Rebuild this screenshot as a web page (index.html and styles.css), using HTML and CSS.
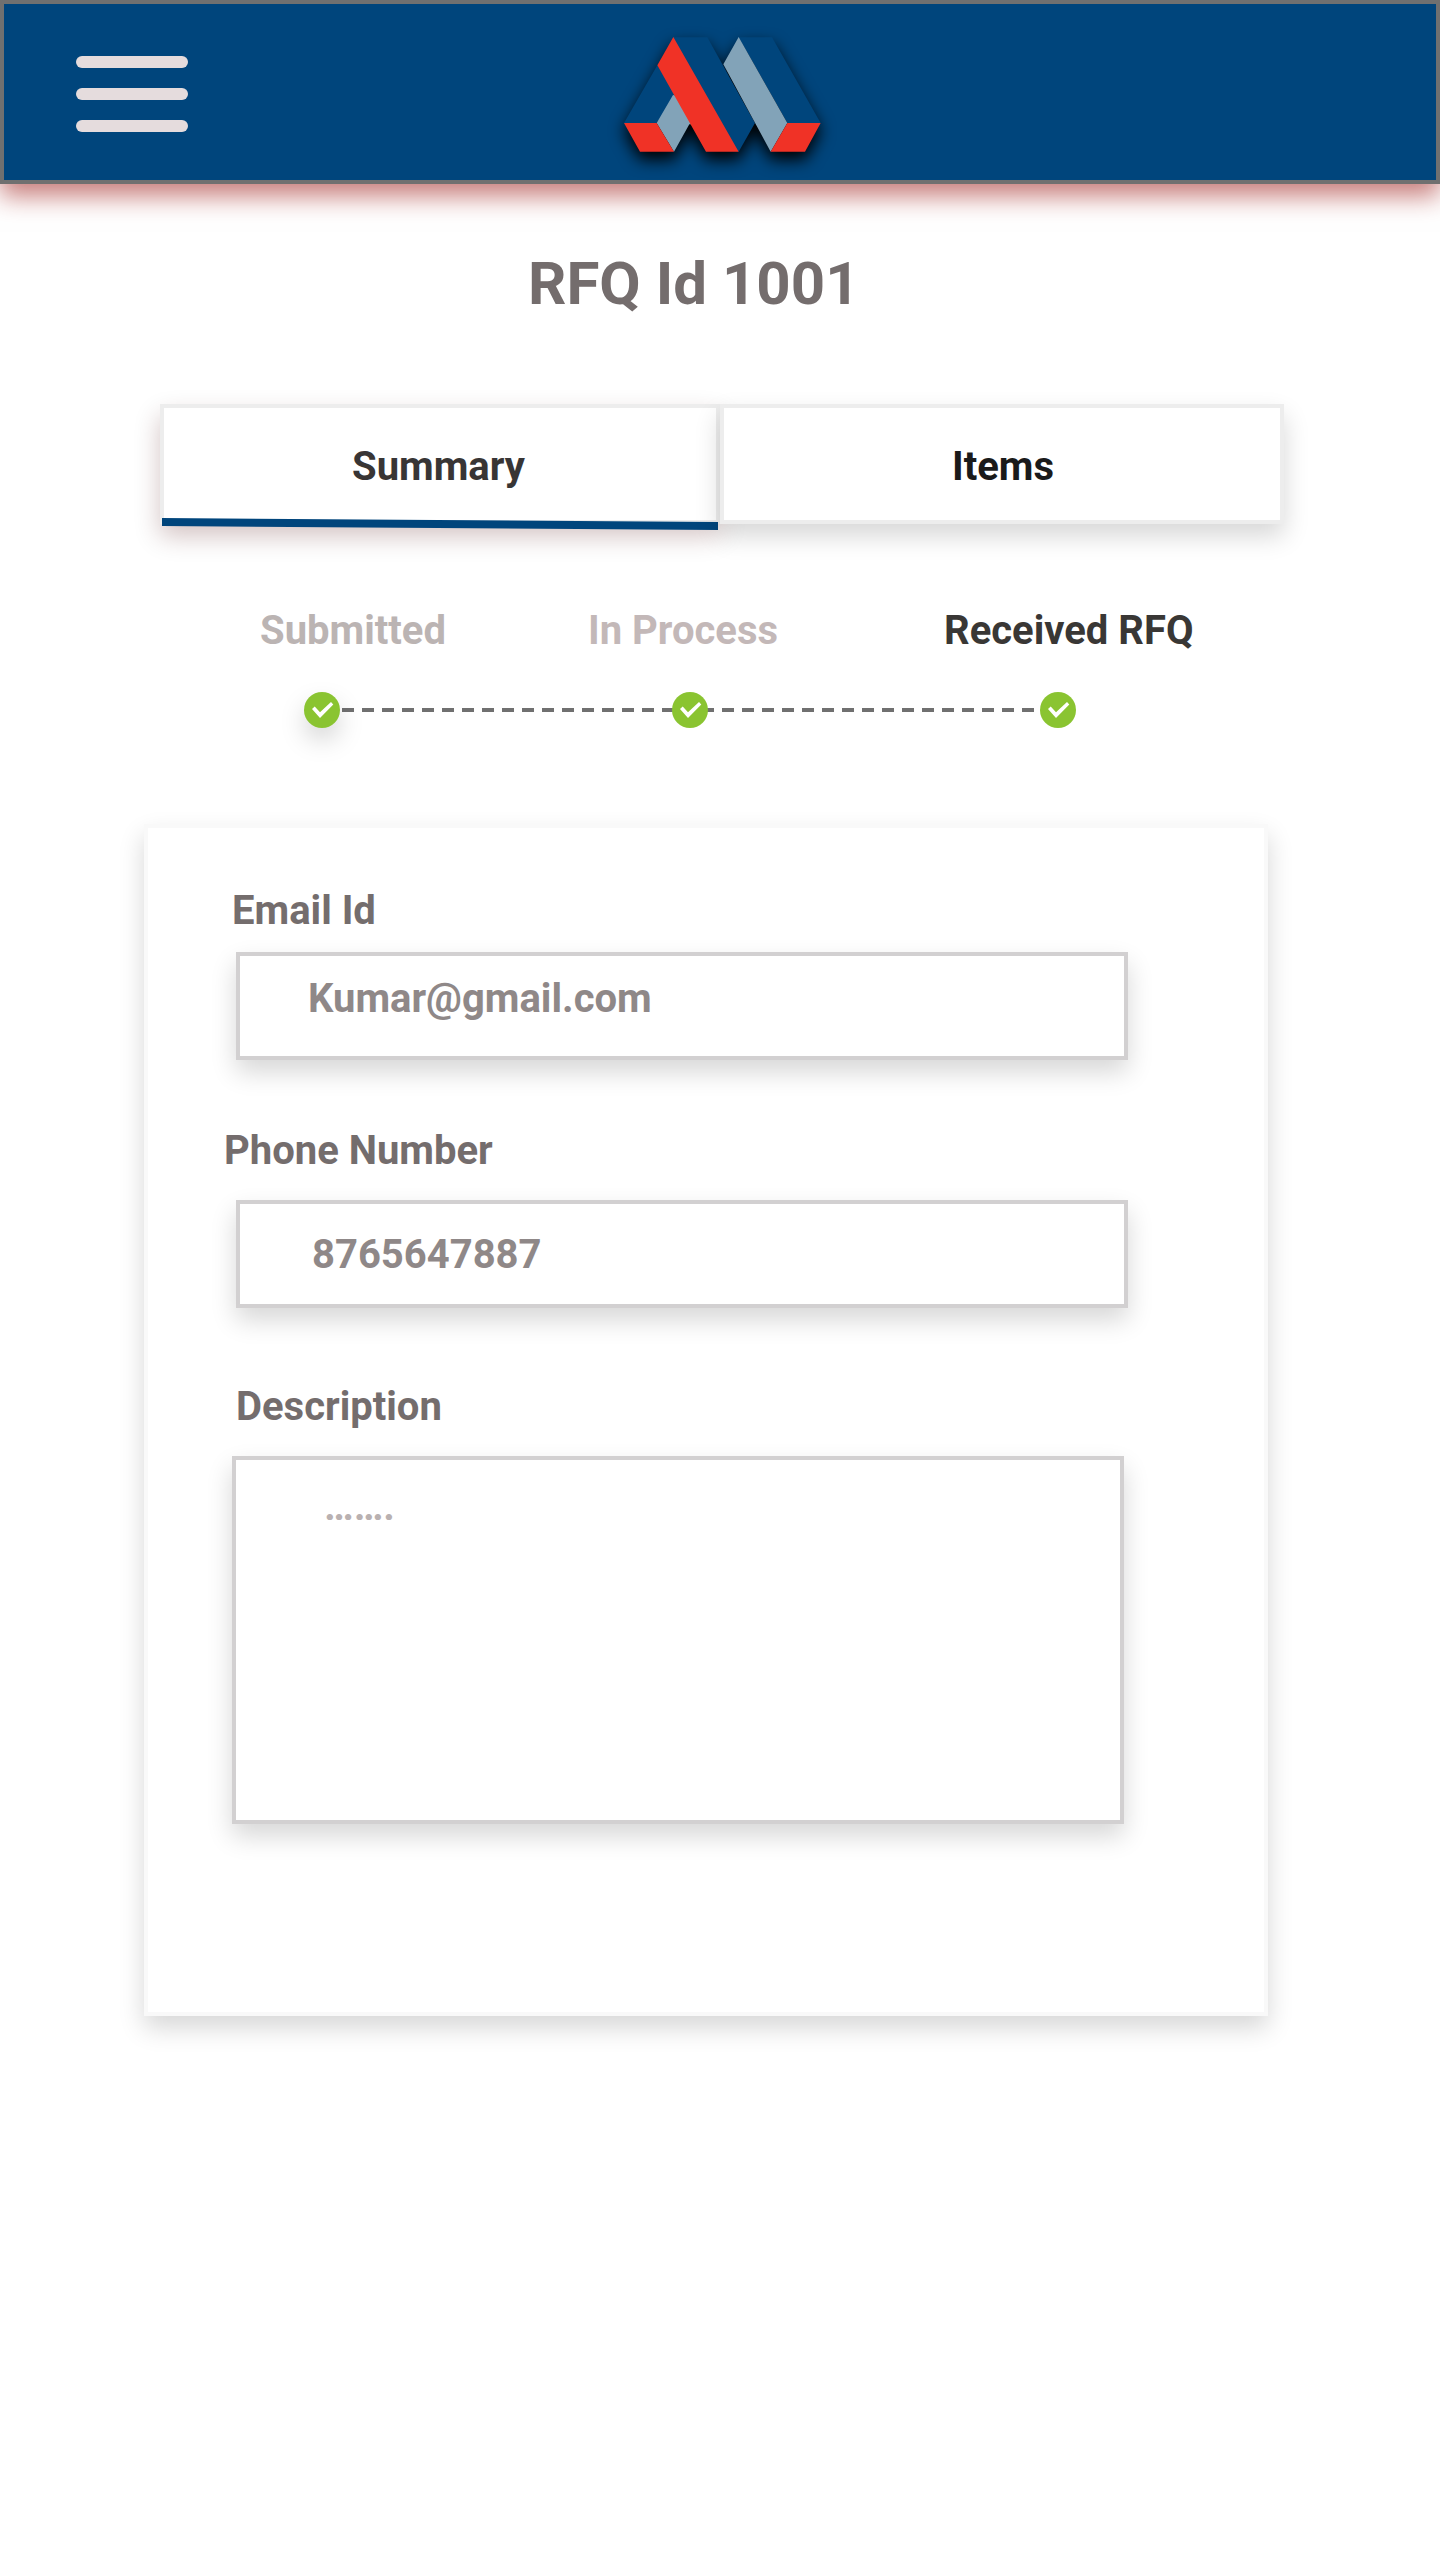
FILE: index.html
```html
<!DOCTYPE html>
<html lang="en">
<head>
<meta charset="utf-8">
<title>RFQ Id 1001</title>
<link rel="stylesheet" href="styles.css">
</head>
<body>
<header class="topbar">
  <div class="menu"><span class="menu-bar"></span><span class="menu-bar"></span><span class="menu-bar"></span></div>
  <svg class="logo" viewBox="72 80 591 345">
    <path fill="#00457c" d="M220 81H322L465 338L416 424L300 300ZM172 165L72 338H170L230 256ZM416 81H516L662 338H562Z"/>
    <path fill="#82a3b8" d="M170 338L219 254L230 256L274 342H268L222 424ZM416 80L370 162L512 424L562 338Z"/>
    <path fill="#f03226" d="M220 80L172 165L318 424H416ZM72 338H170L222 424H120ZM562 338H662L615 424H512Z"/>
  </svg>
</header>
<main>
  <h1 class="title">RFQ Id 1001</h1>
  <nav class="tabs">
    <div class="tab tab-summary">Summary
      <svg class="tab-line" viewBox="0 0 556 12"><path d="M0 0L556 4V12L0 8Z" fill="#00457c"/></svg>
    </div>
    <div class="tab tab-items">Items</div>
  </nav>
  <section class="status">
    <div class="labels">
      <span class="label submitted">Submitted</span>
      <span class="label process">In Process</span>
      <span class="label received">Received RFQ</span>
    </div>
    <svg class="track" viewBox="0 0 772 36">
      <defs>
        <g id="step"><circle cx="18" cy="18" r="18" fill="#8ac431"/><path fill="#fff" d="M8 17L10.7 14.5L16 20.3L27 10L29.3 12.5L16 26Z"/></g>
      </defs>
      <path d="M38 18H732" stroke="#707070" stroke-width="4" stroke-dasharray="12 8"/>
      <use class="step-shadow" href="#step"/>
      <use href="#step" x="368"/>
      <use href="#step" x="736"/>
    </svg>
  </section>
  <section class="card">
    <div class="field email">
      <div class="name">Email Id</div>
      <div class="box">Kumar@gmail.com</div>
    </div>
    <div class="field phone">
      <div class="name">Phone Number</div>
      <div class="box">8765647887</div>
    </div>
    <div class="field description">
      <div class="name">Description</div>
      <div class="box">…….</div>
    </div>
  </section>
</main>
</body>
</html>
```
FILE: styles.css
```css
* { box-sizing: border-box; }
body {
  margin: 0;
  min-height: 2560px;
  background: #fff;
  font: 700 40px/47px Roboto, sans-serif;
}
.topbar {
  display: flex;
  align-items: flex-start;
  height: 184px;
  border: 4px solid #707070;
  background: #00457c;
  box-shadow: 0 12px 24px rgba(153, 19, 15, .55);
}
.menu {
  display: flex;
  flex-direction: column;
  gap: 20px;
  width: 112px;
  margin: 52px 0 0 72px;
}
.menu-bar { height: 12px; border-radius: 6px; background: #e5dcdd; }
.logo {
  width: 197px;
  height: 115px;
  margin: 32.6px 0 0 436px;
  overflow: visible;
  filter: drop-shadow(0 8px 8px #000);
}
.title {
  margin: 64px 0 0 528px;
  color: #746d6d;
  font-size: 60px;
  font-weight: 700;
  line-height: 71px;
}
.tabs { display: flex; margin: 85px 0 0 160px; }
.tab {
  position: relative;
  height: 120px;
  padding-top: 35px;
  border: 4px solid #ededed;
  background: #fff;
}
.tab-summary {
  width: 560px;
  padding-left: 188px;
  color: #383535;
  box-shadow: 0 12px 24px rgba(70, 0, 0, .24);
}
.tab-items {
  width: 564px;
  padding-left: 228px;
  color: #1a1a1a;
  box-shadow: 0 12px 24px rgba(0, 0, 0, .16);
}
.tab-line {
  position: absolute;
  left: -2px;
  bottom: -10px;
  width: 556px;
  height: 12px;
}
.status { margin-top: 83px; }
.labels { display: flex; height: 47px; white-space: nowrap; }
.submitted { width: 328px; margin-left: 260px; color: #bbb4b3; }
.process { width: 356px; color: #c3b8b8; }
.received { color: #393735; }
.track {
  display: block;
  width: 772px;
  height: 36px;
  margin: 38px 0 0 304px;
  overflow: visible;
}
.step-shadow { filter: drop-shadow(0 12px 12px rgba(0, 0, 0, .16)); }
.card {
  width: 1124px;
  height: 1192px;
  margin: 96px 0 0 144px;
  padding-top: 59px;
  border: 4px solid #f9f9f9;
  background: #fff;
  box-shadow: 0 12px 24px rgba(0, 0, 0, .16);
}
.name { color: #746d6d; }
.box {
  width: 892px;
  height: 108px;
  margin-left: 88px;
  border: 4px solid #d2d0d1;
  background: #fff;
  color: #8f8888;
  box-shadow: 0 12px 24px rgba(0, 0, 0, .16);
}
.email .name { padding-left: 84px; }
.email .box { margin-top: 18px; padding: 19px 0 0 68px; }
.phone { margin-top: 67px; }
.phone .name { padding-left: 76px; }
.phone .box { margin-top: 26px; padding: 27px 0 0 72px; }
.description { margin-top: 75px; }
.description .name { padding-left: 88px; }
.description .box {
  height: 368px;
  margin: 26px 0 0 84px;
  padding: 23px 0 0 88px;
  color: #b9b1b1;
}
```
